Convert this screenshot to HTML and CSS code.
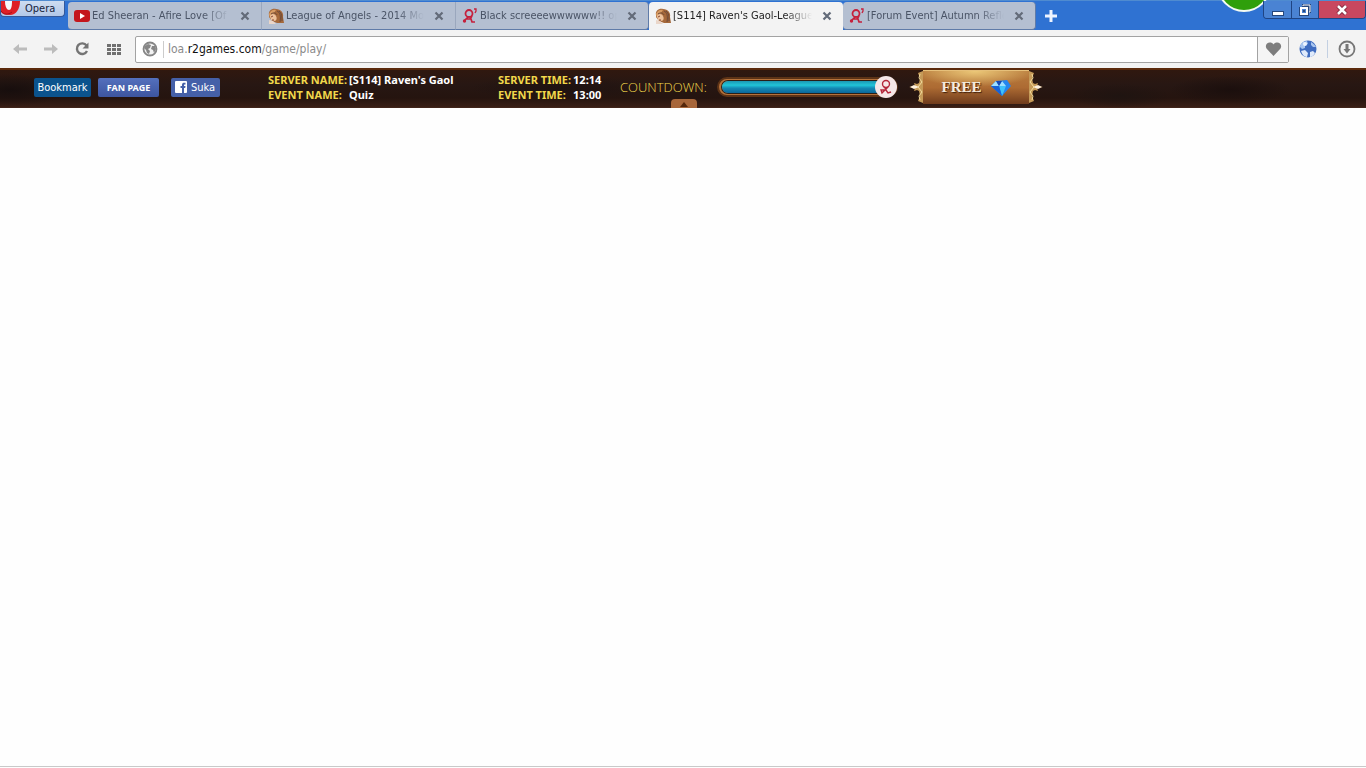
FILE: index.html
```html
<!DOCTYPE html>
<html lang="en">
  <head>
    <meta charset="utf-8" />
    <meta name="viewport" content="width=device-width, initial-scale=1" />
    <title>[S114] Raven's Gaol-League of Angels</title>
    <link rel="stylesheet" href="styles.css">
  </head>
  <body>
    <svg class="defs" aria-hidden="true">
      <symbol id="close" viewBox="0 0 10 10">
        <path d="M1.5 1.5l7 7M8.5 1.5l-7 7" stroke="currentColor" stroke-width="2.2" />
      </symbol>
      <symbol id="angel" viewBox="0 0 16 16">
        <path d="M1 7C0 3 4 0 8 1c5 0 8 4 7 8l1 6H9L4 13 1 9z" fill="#a5683a" />
        <path d="M1 6c1-3 4-5 7-4L4 8l-2 2z" fill="#d79b63" />
        <path d="M2 8c2-3 5-2 6 0s1 4-1 5l-4-1z" fill="#edc29c" />
        <path d="M9 3c3 1 4 5 3 11M11 3c3 2 3 6 3 10M3 6c3-2 5-1 6 1" stroke="#6e4a38" fill="none" />
        <path d="M3 9l2-1M4 12l2 0" stroke="#8a4b35" />
        <path d="M1 12l4 1 3 3H1z" fill="#ead6c9" />
      </symbol>
      <symbol id="r2" viewBox="0 0 16 16">
        <circle cx="7" cy="5.500" r="3.500" fill="none" stroke="currentColor" stroke-width="1.8" />
        <path d="M6 9L2 13M4 11h5l1 3 3 0M10 8l-2 3" fill="none" stroke="currentColor" stroke-width="1.7" />
        <circle cx="2.500" cy="13" r="1.700" fill="currentColor" />
        <path d="M12 1h2v2l-1 2" fill="none" stroke="currentColor" stroke-width="1.3" />
      </symbol>
      <symbol id="r2-mark" viewBox="0 0 16 16">
        <circle cx="8" cy="5" r="3.500" fill="none" stroke="currentColor" stroke-width="1.400" />
        <path d="M6 8l2 2-4 4-1-3h5l2 3 3-1M10 8L8 10" fill="none" stroke="currentColor" stroke-width="1.400" />
      </symbol>
      <symbol id="wing" viewBox="0 0 14 34">
        <path d="M14 1L9 3l2 5-1 5-2 1-3-1 1 3-6 1 6 1-1 3 3-1 2 1 1 5-2 5 5 2z" fill="#c59a58" />
        <path d="M11 4l-1 4 3 4-4 5 4 5-3 4 1 4" stroke="#f3dc9d" fill="none" />
        <path d="M1 17l4-2 5 2-5 2z" fill="#fff1dc" />
      </symbol>
    </svg>

    <header class="titlebar">
      <button class="opera-menu">
        <svg class="opera-logo" viewBox="0 0 20 14" aria-hidden="true">
          <path d="M0 0h19c0 8-4 14-10 14C4 14 1 13 0 11z" fill="#de1f26" />
          <path d="M4 0h7c0 6-1 9-3 9S4 6 4 0z" fill="#f5f8fc" />
          <path d="M0 10c3 4 7 4 11 1" stroke="#a50f18" fill="none" />
        </svg>
        <span>Opera</span>
      </button>
      <nav class="tabs">
        <div class="tab tab--first">
          <svg class="tab-icon" viewBox="0 0 16 16" aria-hidden="true">
            <rect y="2" width="16" height="12" rx="3" fill="#c4161c" />
            <path d="M6 5l5 3-5 3z" fill="#fff" />
          </svg>
          <a class="tab-title" href="#">Ed Sheeran - Afire Love [Of</a>
          <button class="tab-close" aria-label="Close tab"><svg><use href="#close" /></svg></button>
        </div>
        <div class="tab">
          <svg class="tab-icon"><use href="#angel" /></svg>
          <a class="tab-title" href="#">League of Angels - 2014 Mo</a>
          <button class="tab-close" aria-label="Close tab"><svg><use href="#close" /></svg></button>
        </div>
        <div class="tab tab--last">
          <svg class="tab-icon tab-icon--r2"><use href="#r2" /></svg>
          <a class="tab-title" href="#">Black screeeewwwwww!! op</a>
          <button class="tab-close" aria-label="Close tab"><svg><use href="#close" /></svg></button>
        </div>
        <div class="tab tab--active">
          <svg class="tab-icon"><use href="#angel" /></svg>
          <a class="tab-title" href="#">[S114] Raven's Gaol-League</a>
          <button class="tab-close" aria-label="Close tab"><svg><use href="#close" /></svg></button>
        </div>
        <div class="tab tab--first tab--last">
          <svg class="tab-icon tab-icon--r2"><use href="#r2" /></svg>
          <a class="tab-title" href="#">[Forum Event] Autumn Refle</a>
          <button class="tab-close" aria-label="Close tab"><svg><use href="#close" /></svg></button>
        </div>
        <button class="new-tab" aria-label="New tab">
          <svg viewBox="0 0 12 12"><path d="M6 0v12M0 6h12" stroke="#eef4ff" stroke-width="3" /></svg>
        </button>
      </nav>
      <span class="orb"></span>
      <div class="window-buttons">
        <button class="win win--min" aria-label="Minimize">
          <svg viewBox="0 0 14 14"><rect x="1" y="8" width="12" height="5" fill="#26477c" /><rect x="2" y="9" width="10" height="3" fill="#fff" /></svg>
        </button>
        <button class="win win--restore" aria-label="Restore">
          <svg viewBox="0 0 14 14">
            <path d="M4 1h9v9h-2v3H1V4h3z" fill="#26477c" />
            <path d="M5 3V2h7v7h-1" fill="none" stroke="#fff" />
            <rect x="3" y="5" width="6" height="6" fill="#4a83d3" stroke="#fff" stroke-width="2" />
            <rect x="5" y="7" width="2" height="2" fill="#26477c" />
          </svg>
        </button>
        <button class="win win--close" aria-label="Close">
          <svg viewBox="0 0 14 14">
            <path d="M3 3l8 8M11 3l-8 8" stroke="#7a2438" stroke-width="4.4" />
            <path d="M3 3l8 8M11 3l-8 8" stroke="#fff" stroke-width="2.6" />
          </svg>
        </button>
      </div>
    </header>

    <div class="toolbar">
      <button class="tool tool--dim" aria-label="Back">
        <svg viewBox="0 0 16 16"><path d="M1 8l6-5v3.500h8v3H7V13z" fill="#bcbcbc" /></svg>
      </button>
      <button class="tool tool--dim" aria-label="Forward">
        <svg viewBox="0 0 16 16"><path d="M15 8L9 3v3.500H1v3h8V13z" fill="#bcbcbc" /></svg>
      </button>
      <button class="tool" aria-label="Reload">
        <svg viewBox="0 0 16 16">
          <path d="M12.500 4.500A5.300 5.300 0 1 0 13 10" fill="none" stroke="#747474" stroke-width="2.400" />
          <path d="M14.500 1.500v6h-6z" fill="#747474" />
        </svg>
      </button>
      <button class="tool" aria-label="Speed Dial">
        <svg viewBox="0 0 16 16" fill="#707070">
          <path d="M1 3h4v3H1zM6 3h4v3H6zM11 3h4v3h-4zM1 7h4v3H1zM6 7h4v3H6zM11 7h4v3h-4zM1 11h4v3H1zM6 11h4v3H6zM11 11h4v3h-4z" />
        </svg>
      </button>
      <div class="address">
        <svg class="globe" viewBox="0 0 16 16" aria-hidden="true">
          <circle cx="8" cy="8" r="6.500" fill="#f2f2f2" stroke="#868686" stroke-width="1.800" />
          <path d="M3 5l3-2 3 1-1 3-2 1 2 2-1 3-2-1-1-3-2-2zM10 5l3 0 1 3-2 4-1-3-2-1z" fill="#868686" />
        </svg>
        <a class="url" href="#">loa.<b>r2games.com</b>/game/play/</a>
        <button class="heart" aria-label="Add to bookmarks">
          <svg viewBox="0 0 16 16"><path d="M8 15L1 7.500C-1 4 2 1 5 1.500c1.500 0 2.500 1 3 2 .5-1 1.500-2 3-2 3-.5 6 2.500 4 6z" fill="#7d7d7d" /></svg>
        </button>
      </div>
      <button class="tool tool--globe" aria-label="Translate">
        <svg viewBox="0 0 18 18">
          <circle cx="9" cy="9" r="8.500" fill="#3f6cc0" />
          <path d="M1 7c0-3 3-6 7-6l1 3-3 1 0 3-3 1zM12 2c2 1 4 3 5 5l-3 0-2-2z" fill="#a9c6f0" />
          <path d="M2 11l4-1 3 3-1 4c-3 0-5-3-6-6zM11 12l3-1 2 2c-1 2-3 4-5 4z" fill="#dfeafb" />
          <circle cx="6" cy="4" r="2" fill="#eef5ff" />
        </svg>
      </button>
      <button class="tool tool--download" aria-label="Downloads">
        <svg viewBox="0 0 18 18">
          <circle cx="9" cy="9" r="7.500" fill="none" stroke="#777" stroke-width="1.800" />
          <path d="M7.500 4h3v5h2L9 13.500 5.500 9h2z" fill="#777" />
        </svg>
      </button>
    </div>

    <div class="gamebar">
      <button class="bookmark">Bookmark</button>
      <a class="fan-page" href="#">FAN PAGE</a>
      <button class="like">
        <svg viewBox="0 0 12 12" aria-hidden="true">
          <rect width="12" height="12" rx="1" fill="#fff" />
          <path d="M7 12V7H5.500V5H7V4c0-2 1-2.500 3.500-2.300v1.800C9 3.400 9 3.700 9 5h1.500l-.3 2H9v5z" fill="#4560a8" />
        </svg>
        <span>Suka</span>
      </button>
      <dl class="info info--name">
        <dt>SERVER NAME:</dt><dd>[S114] Raven's Gaol</dd>
        <dt>EVENT NAME:</dt><dd>Quiz</dd>
      </dl>
      <dl class="info info--time">
        <dt>SERVER TIME:</dt><dd>12:14</dd>
        <dt>EVENT TIME:</dt><dd>13:00</dd>
      </dl>
      <span class="countdown">COUNTDOWN:</span>
      <div class="meter">
        <div class="meter-fill"></div>
        <span class="meter-knob"><svg><use href="#r2-mark" /></svg></span>
      </div>
      <a class="free" href="#">
        <svg class="wing"><use href="#wing" /></svg>
        <span class="free-plate">
          FREE
          <svg class="gem" viewBox="0 0 20 16" aria-hidden="true">
            <path d="M0 6l5-5 11-1 4 6-9 10z" fill="#2586ee" />
            <path d="M0 6l5-5 3 5zM8 6l3-5 4 5z" fill="#9ee0ff" />
            <path d="M8 6h7l-4 10z" fill="#3fc3fb" />
            <path d="M0 6h8l3 10z" fill="#1762d6" />
            <path d="M5 1l6 0-3 5z" fill="#1549b5" />
          </svg>
        </span>
        <svg class="wing wing--right"><use href="#wing" /></svg>
      </a>
      <button class="collapse" aria-label="Collapse bar">
        <svg viewBox="0 0 8 5"><path d="M4 0l4 5H0z" fill="#54270c" /></svg>
      </button>
    </div>

    <main class="game"></main>
  </body>
</html>
```
FILE: styles.css
```css
:root {
  --ui-font: "DejaVu Sans Condensed", "DejaVu Sans", sans-serif;
  --chrome-blue: #2f72d2;
  --toolbar: #f3f3f3;
  --gold: #f2d84b;
}

* {
  box-sizing: border-box;
}

body {
  margin: 0;
  min-height: 100vh;
  display: flex;
  flex-direction: column;
  background: #fefefe;
  font-family: var(--ui-font);
  font-size: 11px;
}

button {
  margin: 0;
  padding: 0;
  border: 0;
  background: none;
  font: inherit;
  color: inherit;
}

a {
  color: inherit;
  text-decoration: none;
}

svg {
  display: block;
}

.defs {
  position: absolute;
  width: 0;
  height: 0;
}

/* title bar */
.titlebar {
  position: relative;
  display: flex;
  align-items: flex-start;
  height: 30px;
  background: var(--chrome-blue);
  border-top: 1px solid #4f8bd0;
}

.opera-menu {
  display: flex;
  gap: 4px;
  width: 65px;
  height: 16px;
  border: 1px solid #35599a;
  border-top: 0;
  border-radius: 0 0 4px 4px;
  background: linear-gradient(#cddcf0, #b3c8e8);
  line-height: 16px;
  color: #16233c;
}

.opera-logo {
  width: 20px;
  height: 14px;
}

.tabs {
  flex: 1;
  display: flex;
  min-width: 0;
  height: 29px;
  padding-left: 3px;
}

.tab {
  flex: 0 1 194px;
  display: flex;
  align-items: center;
  min-width: 0;
  height: 28px;
  margin-top: 1px;
  padding: 0 11px 0 6px;
  background: #b4bfd1;
  border-right: 1px solid #9aa7bd;
  border-bottom: 1px solid #5f7ba8;
  color: #4a5466;
}

.tab--first {
  border-radius: 4px 0 0 4px;
}

.tab--last {
  flex-basis: 193px;
  border-color: #5f7ba8;
  border-radius: 0 4px 4px 0;
}

.tab--first.tab--last {
  border-radius: 4px;
}

.tab--active {
  border: 0;
  border-radius: 4px 4px 0 0;
  background: var(--toolbar);
  color: #222;
}

.tab-icon {
  flex: none;
  width: 16px;
  height: 16px;
  margin-right: 2px;
}

.tab-icon--r2 {
  color: #c5203c;
}

.tab-title {
  flex: 1;
  overflow: hidden;
  white-space: nowrap;
  line-height: 16px;
  -webkit-mask-image: linear-gradient(90deg, #000 80%, transparent);
  mask-image: linear-gradient(90deg, #000 80%, transparent);
}

.tab-close {
  width: 10px;
  height: 10px;
  margin-left: 10px;
  color: #636b79;
}

.tab-close svg {
  width: 10px;
  height: 10px;
}

.new-tab {
  width: 30px;
  height: 29px;
  padding-left: 9px;
}

.new-tab svg {
  width: 12px;
  height: 12px;
}

/* desktop widget hanging over the title bar */
.orb {
  position: absolute;
  top: -43px;
  right: 95px;
  width: 54px;
  height: 54px;
  border: 2px solid #f4fbf2;
  border-radius: 50%;
  background: #2f9f0b;
}

.window-buttons {
  position: relative;
  display: flex;
  height: 18px;
  border: 1px solid #1f4483;
  border-top: 0;
  border-radius: 0 0 4px 4px;
  overflow: hidden;
}

.win {
  display: flex;
  align-items: center;
  justify-content: center;
  width: 28px;
  background: #4a83d3;
  border-right: 1px solid #1f4483;
}

.win--restore {
  width: 27px;
}

.win--close {
  width: 46px;
  border: 0;
  background: #c8475f;
}

.win svg {
  width: 14px;
  height: 14px;
}

/* navigation */
.toolbar {
  display: flex;
  align-items: center;
  height: 38px;
  padding-left: 12px;
  background: var(--toolbar);
}

.tool {
  width: 16px;
  height: 16px;
  margin-right: 16px;
}

.tool--dim {
  margin-right: 15px;
}

.address {
  flex: 1;
  display: flex;
  align-items: center;
  height: 27px;
  margin-left: -3px;
  padding-left: 6px;
  border: 1px solid #a3a3a3;
  border-radius: 2px;
  background: #fff;
}

.globe {
  width: 16px;
  height: 16px;
  margin-right: 5px;
}

.url {
  flex: 1;
  padding-left: 4px;
  border-left: 1px solid #ccc;
  font-size: 12px;
  line-height: 17px;
  color: #8a8a8a;
}

.url b {
  font-weight: normal;
  color: #111;
}

.heart {
  width: 31px;
  height: 25px;
  padding-left: 7px;
  border-left: 1px solid #a3a3a3;
  background: #f5f5f5;
}

.heart svg {
  width: 17px;
  height: 16px;
}

.tool--globe {
  width: 29px;
  height: 18px;
  margin: 0 0 0 10px;
  border-right: 1px solid #c3d0e2;
}

.tool--globe svg,
.tool--download svg {
  width: 18px;
  height: 18px;
}

.tool--download {
  width: 18px;
  height: 18px;
  margin: 0 10px;
}

/* game portal bar */
.gamebar {
  position: relative;
  display: flex;
  align-items: center;
  height: 40px;
  padding: 0 0 3px 34px;
  border-top: 2px solid #5b2a0c;
  border-bottom: 1px solid #40241a;
  background:
    radial-gradient(ellipse 60px 14px at 1230px 20px, #1b0f0d, transparent),
    radial-gradient(ellipse 50px 12px at 1120px 26px, #1f1411, transparent),
    radial-gradient(ellipse 90px 12px at 560px 18px, #1e1210, transparent),
    radial-gradient(ellipse 60px 16px at 10px 20px, #170e0d, transparent),
    linear-gradient(#30180f, #271713 40%, #25140f 75%, #381e15);
}

.bookmark,
.fan-page,
.like {
  height: 19px;
  border-radius: 2px;
  color: #fff;
  line-height: 19px;
  text-align: center;
}

.bookmark {
  width: 57px;
  background: #0b538d;
}

.fan-page {
  width: 61px;
  margin-left: 7px;
  background: linear-gradient(#5470bd, #3d559f);
  font-family: "Noto Sans", sans-serif;
  font-size: 9px;
  font-weight: bold;
}

.like {
  display: flex;
  align-items: center;
  gap: 4px;
  width: 49px;
  margin-left: 12px;
  padding-left: 4px;
  background: #4560a8;
}

.like svg {
  width: 12px;
  height: 12px;
}

.info {
  display: grid;
  grid-template-columns: max-content 1fr;
  column-gap: 2px;
  margin: 0 0 0 48px;
  font-family: "Noto Sans", sans-serif;
  font-weight: bold;
  line-height: 15px;
  color: var(--gold);
}

.info dd {
  margin: 0;
  color: #fff;
}

.info--name {
  width: 188px;
}

.info--time {
  width: 104px;
  margin-left: 42px;
}

.countdown {
  width: 88px;
  margin-left: 18px;
  font-family: "Open Sans", sans-serif;
  font-size: 13px;
  font-weight: 300;
  color: var(--gold);
}

.meter {
  position: relative;
  width: 181px;
  height: 20px;
  margin-left: 9px;
  padding: 2px 3px;
  border: 2px solid #5b3216;
  border-radius: 10px;
  background: #b5713a;
}

.meter-fill {
  height: 12px;
  border-radius: 6px 0 0 6px;
  background: linear-gradient(#1c97b4, #20c5d8 35%, #1489b4 60%, #0c6799);
  box-shadow: 0 0 0 1px #2a2018;
}

.meter-knob {
  position: absolute;
  top: -3px;
  right: -1px;
  display: flex;
  align-items: center;
  justify-content: center;
  width: 22px;
  height: 22px;
  border-radius: 50%;
  background: #f5e7e7;
  color: #b3273a;
}

.meter-knob svg {
  width: 16px;
  height: 16px;
}

.free {
  display: flex;
  margin-left: 11px;
}

.wing {
  width: 14px;
  height: 34px;
}

.wing--right {
  transform: scaleX(-1);
}

.free-plate {
  display: flex;
  align-items: center;
  justify-content: center;
  gap: 9px;
  width: 106px;
  height: 34px;
  background:
    radial-gradient(ellipse 60px 16px at 52px 0, #ecc878, transparent),
    linear-gradient(#b97d3e, #ad6b33 50%, #6f3b1c);
  border-top: 1px solid #e6c07a;
  font-family: "Liberation Serif", serif;
  font-size: 15px;
  font-weight: bold;
  color: #f5ecdf;
  text-shadow: 1px 1px 1px #40200d;
}

.gem {
  width: 20px;
  height: 16px;
}

.collapse {
  position: absolute;
  bottom: -1px;
  left: 50%;
  display: flex;
  justify-content: center;
  width: 26px;
  height: 9px;
  margin-left: -12px;
  padding-top: 3px;
  border-radius: 4px 4px 0 0;
  background: #a7663a;
}

.collapse svg {
  width: 8px;
  height: 5px;
}

.game {
  flex: 1;
  margin-bottom: 1px;
  border-bottom: 1px solid #c9c9c9;
}
```
